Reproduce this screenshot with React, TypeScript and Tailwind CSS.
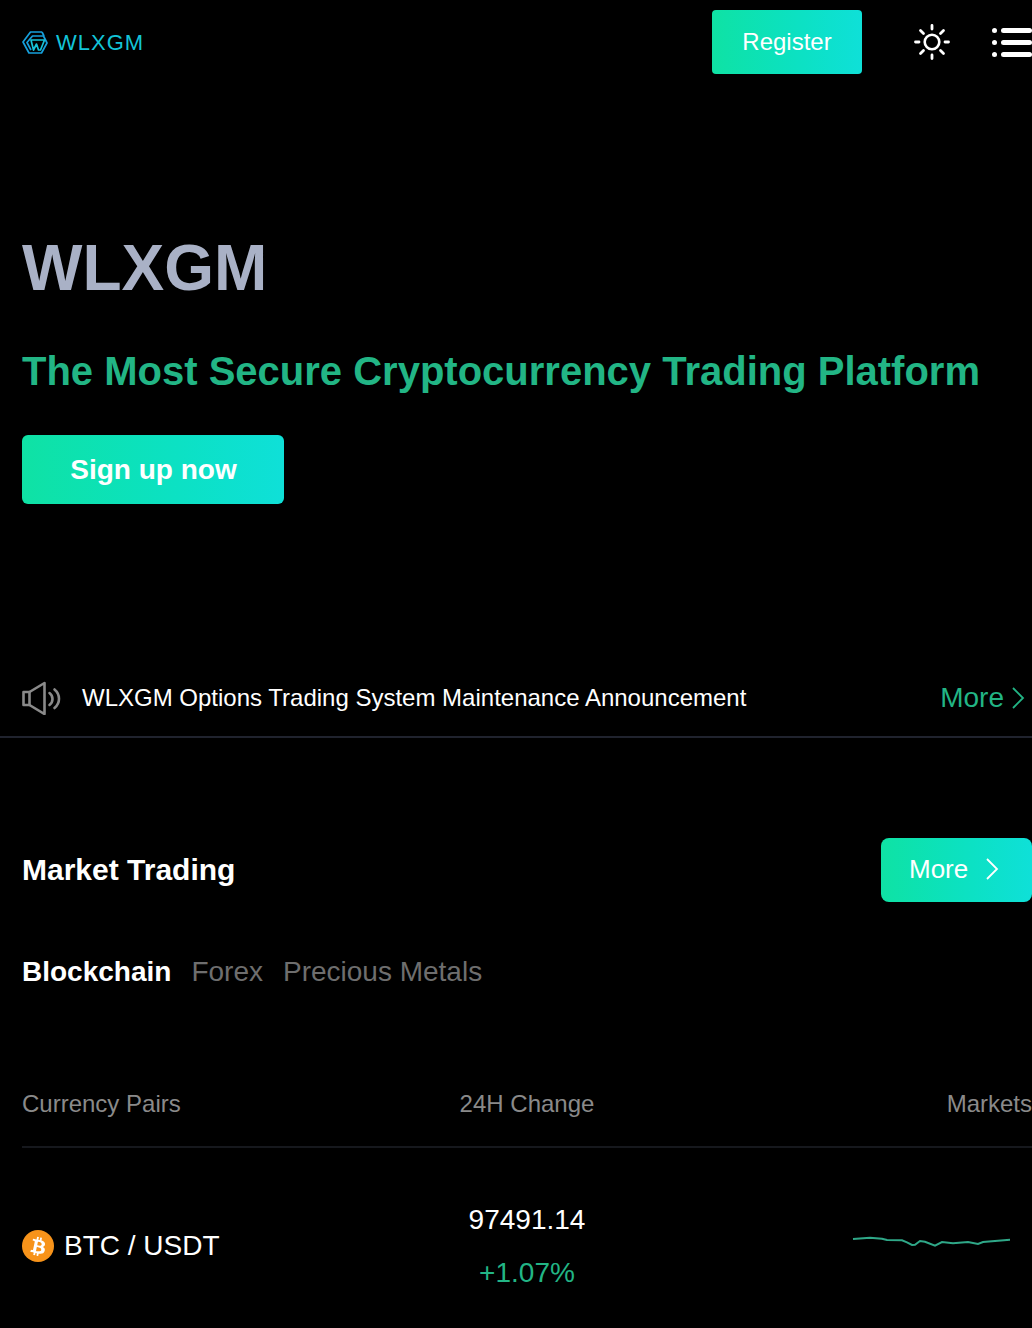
import { FaBtc } from 'react-icons/fa';

const sans = 'font-["Liberation_Sans",Arial,sans-serif]';

function Logo() {
  return (
    <svg width="26" height="23" viewBox="0 0 26 23" fill="none" strokeWidth="1.7" strokeLinejoin="round">
      <path d="M20 1H8.5L1 11L7 22H19.5L25 12L21.5 5H10.5L5 11.5L9 19" stroke="#16a0dc" />
      <path d="M20 1L22 5" stroke="#16a0dc" />
      <path d="M9 9H22.5L18.5 19H16.5L14.5 13L11.5 19L9 9Z" stroke="#17c4d8" />
    </svg>
  );
}

function SunIcon() {
  return (
    <svg width="36" height="36" viewBox="0 0 36 36" fill="none" stroke="#fff" strokeLinecap="round">
      <circle cx="18" cy="18" r="7.3" strokeWidth="2.6" />
      <path
        d="M18 1.5V5M18 31V34.5M1.5 18H5M31 18H34.5M6.5 6.5L9.5 9.5M26.5 26.5L29.5 29.5M6.5 29.5L9.5 26.5M26.5 9.5L29.5 6.5"
        strokeWidth="2.8"
      />
    </svg>
  );
}

function MenuIcon() {
  return (
    <div className="flex flex-col gap-[7px] w-[40px]">
      {[0, 1, 2].map((i) => (
        <div key={i} className="flex items-center gap-[4px] h-[5px]">
          <span className="w-[5px] h-[5px] rounded-full bg-white" />
          <span className="flex-1 h-[5px] rounded-full bg-white" />
        </div>
      ))}
    </div>
  );
}

function Speaker() {
  return (
    <svg width="40" height="34" viewBox="0 0 40 34" fill="none" stroke="#8a8a8a" strokeWidth="2.6" strokeLinejoin="round" strokeLinecap="round">
      <path d="M1.5 11H7.5V24H1.5Z" />
      <path d="M7.5 11L22.5 2V33L7.5 24" />
      <path d="M27.5 12C31.5 15 31.5 21 27.5 24" />
      <path d="M32.5 8.5C38.5 13.5 38.5 22 32.5 27" />
    </svg>
  );
}

function Chevron({ color }: { color: string }) {
  return (
    <svg width="14" height="22" viewBox="0 0 14 22" fill="none" stroke={color} strokeWidth="1.8">
      <path d="M2 1L12 11L2 21" />
    </svg>
  );
}

function Sparkline() {
  return (
    <svg width="160" height="20" viewBox="0 0 160 20" fill="none" stroke="#2fa888" strokeWidth="2">
      <path d="M1 3L18 1.7L30 2.7L35 4L50 4.3L55 6.3L60 9L63 8.7L68 5L73 5.7L83 9.7L90 6L101 7.3L116 6L126 8L131 6L158 3.7" />
    </svg>
  );
}

export default function App() {
  return (
    <div className={`${sans} bg-black w-[1032px] h-[1328px] overflow-hidden text-white`}>
      <header className="flex items-center h-[84px] pl-[22px]">
        <Logo />
        <span className="ml-[8px] text-[22px] tracking-[1px] text-[#13c4d8]">WLXGM</span>
        <button className="ml-auto w-[150px] h-[64px] rounded-[4px] bg-gradient-to-r from-[#0fe2a4] to-[#0fe0d8] text-[24px] text-white">
          Register
        </button>
        <div className="ml-[52px] mr-[42px]">
          <SunIcon />
        </div>
        <MenuIcon />
      </header>

      <section className="pl-[22px] pt-[144px]">
        <h1 className="text-[64px] leading-[80px] font-bold text-[#a9b1c6]">WLXGM</h1>
        <h2 className="mt-[40px] text-[40px] leading-[46px] font-bold text-[#22b585] whitespace-nowrap">
          The Most Secure Cryptocurrency Trading Platform
        </h2>
        <button className="mt-[41px] block w-[262px] h-[69px] pl-[1px] rounded-[6px] bg-gradient-to-r from-[#0fe2a4] to-[#0fe0d8] text-[28px] font-bold text-white">
          Sign up now
        </button>
      </section>

      <div className="mt-[156px] flex items-center h-[78px] pl-[22px] pr-[7px] border-b-2 border-[#20232e]">
        <Speaker />
        <span className="ml-[20px] text-[24px] whitespace-nowrap">WLXGM Options Trading System Maintenance Announcement</span>
        <span className="ml-auto text-[28px] text-[#22b585]">More</span>
        <span className="ml-[7px]">
          <Chevron color="#22b585" />
        </span>
      </div>

      <div className="mt-[100px] flex items-center justify-between pl-[22px]">
        <h3 className="text-[30px] font-bold mb-[2px]">Market Trading</h3>
        <button className="flex items-center w-[151px] h-[64px] pl-[28px] pb-[2px] rounded-[8px] bg-gradient-to-r from-[#0fe2a4] to-[#0fe0d8] text-[26px] text-white">
          More
          <span className="ml-[17px]">
            <Chevron color="#fff" />
          </span>
        </button>
      </div>

      <div className="mt-[52px] flex items-center gap-[20px] pl-[22px] text-[28px] leading-[36px]">
        <span className="font-bold">Blockchain</span>
        <span className="text-[#6e6e6e]">Forex</span>
        <span className="text-[#6e6e6e]">Precious Metals</span>
      </div>

      <div className="mt-[72px] ml-[22px] grid grid-cols-[1fr_auto_1fr] items-center h-[86px] border-b-2 border-[#16181d] text-[24px] text-[#8a8a8a]">
        <span>Currency Pairs</span>
        <span>24H Change</span>
        <span className="text-right">Markets</span>
      </div>

      <div className="ml-[22px] grid grid-cols-[1fr_auto_1fr] items-center h-[196px]">
        <div className="flex items-center gap-[10px] text-[28px]">
          <span className="flex items-center justify-center w-[32px] h-[32px] rounded-full bg-[#f7931a]">
            <FaBtc className="text-white text-[19px] rotate-[12deg]" />
          </span>
          BTC / USDT
        </div>
        <div className="flex flex-col items-center gap-[15px] text-[28px] leading-[38px]">
          <span>97491.14</span>
          <span className="text-[#22b585]">+1.07%</span>
        </div>
        <div className="flex justify-end pr-[20px]">
          <Sparkline />
        </div>
      </div>
    </div>
  );
}
